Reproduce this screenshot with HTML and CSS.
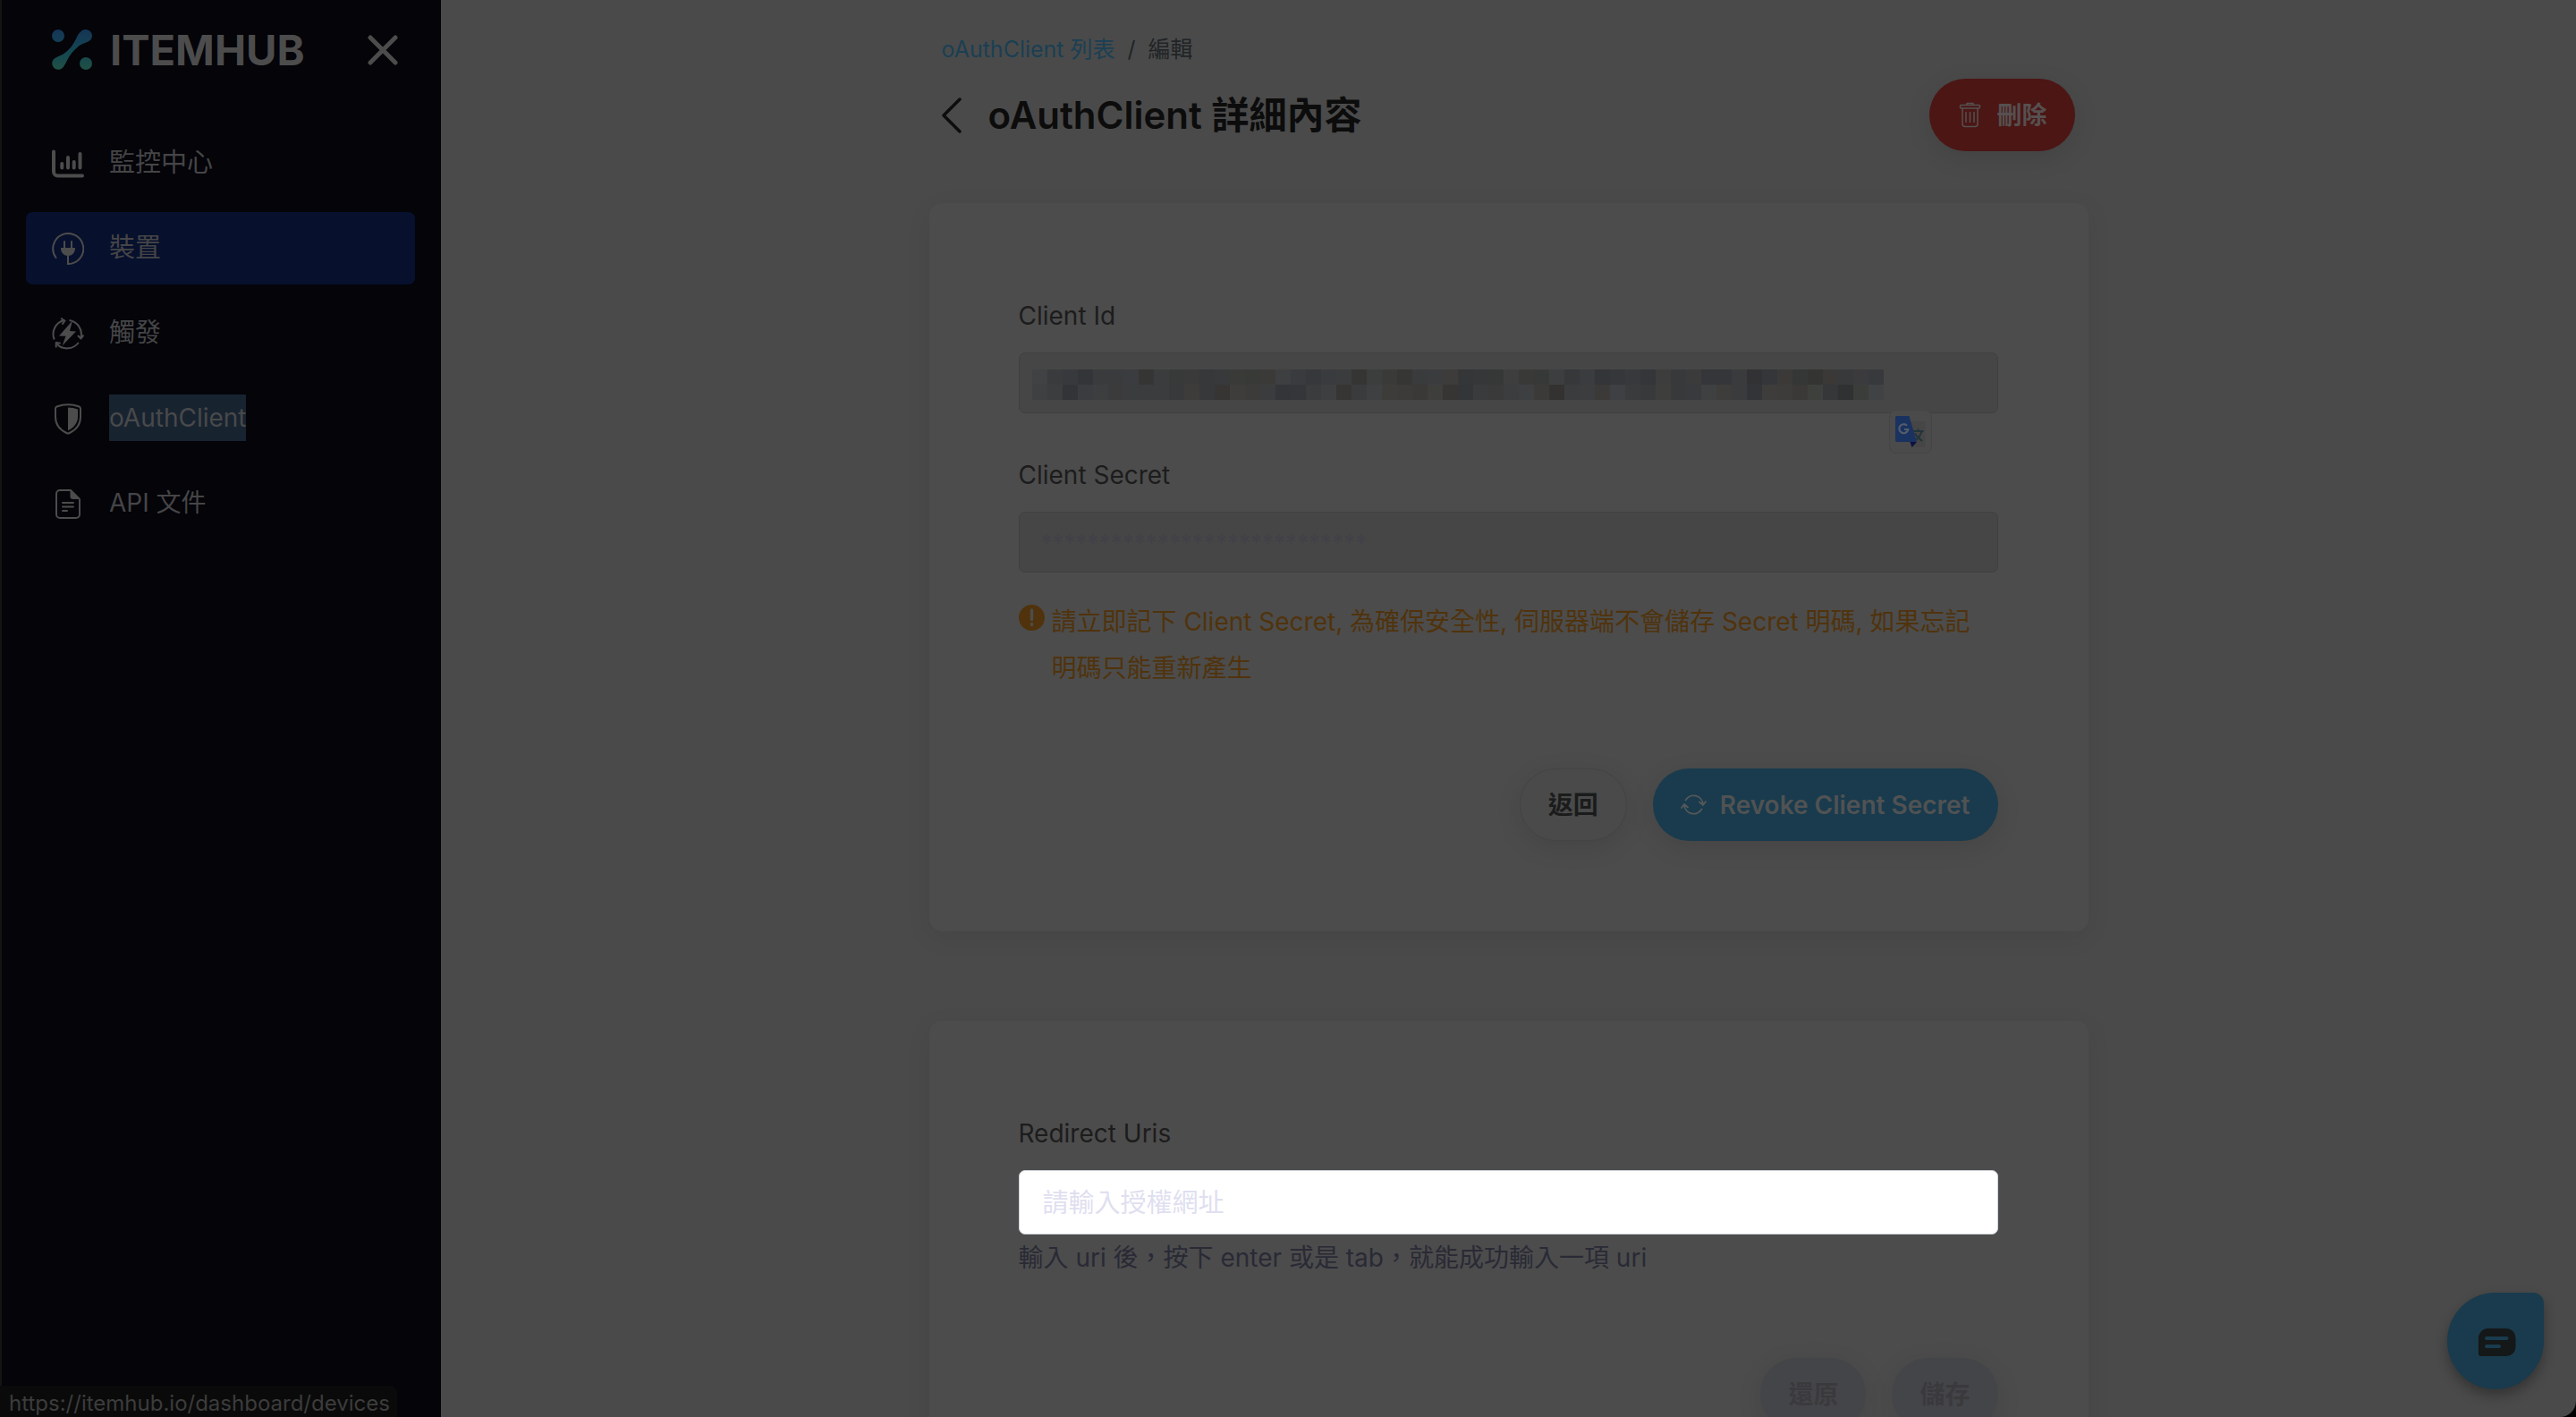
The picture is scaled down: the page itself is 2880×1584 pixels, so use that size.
FILE: index.html
```html
<!DOCTYPE html>
<html lang="zh-Hant">
<head>
<meta charset="utf-8">
<meta name="viewport" content="width=device-width, initial-scale=1">
<title>ItemHub - oAuthClient 詳細內容</title>
<link rel="stylesheet" href="styles.css">
</head>
<body>
<div class="app">
  <aside class="sidebar">
    <div class="sidebar-header">
      <a class="brand" href="#">
        <svg class="brand-mark" viewBox="0 0 45 45" aria-hidden="true">
          <defs>
            <linearGradient id="brand-fill" x1="0" y1="0" x2="0" y2="45" gradientUnits="userSpaceOnUse">
              <stop offset="0" stop-color="#153556"/>
              <stop offset="0.5" stop-color="#134552"/>
              <stop offset="1" stop-color="#205044"/>
            </linearGradient>
          </defs>
          <g fill="url(#brand-fill)">
            <circle cx="7" cy="7" r="7"/>
            <circle cx="38" cy="38" r="7"/>
            <path d="M38 0a7 7 0 0 1 2 13.700C37 15 33 16 30 18.500 24 23.500 20.500 28 17.500 33.500 15.800 37 15.500 38 13.800 40.300A7 7 0 1 1 4.500 31.400C8 29.500 12 28.500 16 25c5.500-4.500 8-9 11-14.500C29 6 30 4.500 31.500 3.200A7 7 0 0 1 38 0z"/>
          </g>
        </svg>
        <span class="brand-name">ITEMHUB</span>
      </a>
      <button class="sidebar-close" type="button" aria-label="關閉選單">
        <svg viewBox="0 0 34 34" aria-hidden="true"><path d="M3 3l28 28M31 3L3 31" fill="none" stroke="#4c4c4c" stroke-width="5" stroke-linecap="round"/></svg>
      </button>
    </div>
    <nav class="nav">
      <a class="nav-item" href="#">
        <svg class="nav-icon" viewBox="0 0 36 36" fill="none" stroke="#4c4c4c" stroke-width="4" stroke-linecap="round" aria-hidden="true"><path d="M2 4.500V27a4.500 4.500 0 0 0 4.500 4.500H34M11.300 18v4.500M18 11v11.500M24.700 16v6.500M31.500 7v15.500"/></svg>
        <span class="nav-label nav-label-zh">監控中心</span>
      </a>
      <a class="nav-item nav-item-active" href="#">
        <svg class="nav-icon" viewBox="0 0 36 36" fill="none" stroke="#4c4c4c" stroke-width="2" stroke-linecap="round" aria-hidden="true"><path d="M4.500 28A17 17 0 1 1 18 35V26M14 10v7M22 10v7"/><path d="M10 17h16v1a8 8 0 0 1-16 0z" fill="#4c4c4c" stroke="none"/></svg>
        <span class="nav-label nav-label-zh">裝置</span>
      </a>
      <a class="nav-item" href="#">
        <svg class="nav-icon" viewBox="0 0 36 36" fill="none" stroke="#4c4c4c" stroke-width="2" aria-hidden="true"><path d="M2.700 24.500A16 16 0 0 1 13.500 3M19.500 3A16 16 0 0 1 32.500 22.500M29.800 28A16 16 0 0 1 5.500 29.500"/><path d="M10 .8l4.500 2.700-3 4.200M29 20l3.500 3.500 3-4M4.700 33.500V28l5 .8" stroke-linejoin="round"/><path d="M23 3.500L8 20.500l7.500.3L11.500 31.500 27 15.500l-7-.5z" fill="#4c4c4c" stroke="none"/></svg>
        <span class="nav-label nav-label-zh">觸發</span>
      </a>
      <a class="nav-item" href="#">
        <svg class="nav-icon" viewBox="0 0 36 36" fill="none" stroke="#4c4c4c" stroke-width="2" stroke-linejoin="round" aria-hidden="true"><path d="M18 2.200c5 0 9 1 12.500 2.300 1.200.5 1.500 1.300 1.500 2.500v9c0 8-5 14.500-12.300 18-1.200.6-2.200.6-3.400 0C9 30.500 4 24 4 16V7c0-1.200.3-2 1.500-2.500C9 3.200 13 2.200 18 2.200z"/><path d="M18 5.500c4 0 7.500.8 11 2V16c0 6.500-4 12-11 15.300z" fill="#4c4c4c" stroke="none"/></svg>
        <span class="nav-label"><mark class="selected">oAuthClient</mark></span>
      </a>
      <a class="nav-item" href="#">
        <svg class="nav-icon" viewBox="0 0 36 36" fill="none" stroke="#4c4c4c" stroke-width="2" stroke-linecap="round" stroke-linejoin="round" aria-hidden="true"><path d="M9 3h12l10 10v17a4 4 0 0 1-4 4H9a4 4 0 0 1-4-4V7a4 4 0 0 1 4-4zM12 17h12M12 21.500h12M12 26h5"/><path d="M20.500 2.500V10a3 3 0 0 0 3 3h8z" fill="#4c4c4c" stroke="none"/></svg>
        <span class="nav-label">API 文件</span>
      </a>
    </nav>
  </aside>

  <main class="main">
    <div class="content">
      <nav class="breadcrumb" aria-label="breadcrumb">
        <a href="#">oAuthClient 列表</a>
        <span>/</span>
        <span>編輯</span>
      </nav>
      <header class="page-header">
        <a class="back-link" href="#" aria-label="返回列表">
          <svg viewBox="0 0 22 40" aria-hidden="true"><path d="M20 2L2 20l18 18" fill="none" stroke="#0d0d0d" stroke-width="3.500" stroke-linecap="round" stroke-linejoin="round"/></svg>
        </a>
        <h1>oAuthClient 詳細內容</h1>
        <button class="btn btn-danger" type="button">
          <svg class="btn-icon" viewBox="0 0 29 29" fill="none" stroke="#565050" stroke-width="1.500" stroke-linejoin="round" stroke-linecap="round" aria-hidden="true"><path d="M4.500 3.500h20a1 1 0 0 1 1 1V6a1 1 0 0 1-1 1h-20a1 1 0 0 1-1-1V4.500a1 1 0 0 1 1-1zM11 3V1.500h7V3M6 7v17.500a3 3 0 0 0 3 3h11a3 3 0 0 0 3-3V7M10 11.500v11M14.500 11.500v11M19 11.500v11"/></svg>
          刪除
        </button>
      </header>

      <section class="card">
        <div class="field">
          <label for="client-id">Client Id</label>
          <div class="masked-field">
            <input class="input" id="client-id" type="text" readonly>
            <svg class="mosaic" id="mosaic" viewBox="0 0 56 2" preserveAspectRatio="none" shape-rendering="crispEdges" aria-hidden="true"></svg>
            <button class="translate" type="button" aria-label="翻譯">
              <svg viewBox="0 0 34 35" aria-hidden="true">
                <path d="M14 6h18a1.500 1.500 0 0 1 1.500 1.500v26A1.500 1.500 0 0 1 32 35H19z" fill="#464646"/>
                <path d="M20 17h11.500M25.500 14.500V17M29.500 17c-1 4-4 8-7.500 10.500M22 19.500c2 4 5 6 8 8.500" fill="none" stroke="#22343a" stroke-width="2"/>
                <path d="M16.500 29H24l-5.500 6z" fill="#0d1040"/>
                <path d="M1.500 0H15.500L24 29H1.500A1.500 1.500 0 0 1 0 27.500v-26A1.500 1.500 0 0 1 1.500 0z" fill="#1a325f"/>
                <path d="M13 10.800A5 5 0 1 0 14.300 15H10" fill="none" stroke="#545c6c" stroke-width="2.200"/>
              </svg>
            </button>
          </div>
        </div>
        <div class="field">
          <label for="client-secret">Client Secret</label>
          <input class="input input-secret" id="client-secret" type="text" placeholder="****************************" readonly>
        </div>
        <p class="notice">
          <svg class="notice-icon" viewBox="0 0 29 29" aria-hidden="true"><circle cx="14.500" cy="14.500" r="14.500" fill="#50330c"/><path d="M14.500 6v10.500M14.500 21.500v1" stroke="#4c4c4c" stroke-width="3.400" stroke-linecap="round"/></svg>
          <span>請立即記下 Client Secret, 為確保安全性, 伺服器端不會儲存 Secret 明碼, 如果忘記明碼只能重新產生</span>
        </p>
        <div class="actions">
          <button class="btn btn-light" type="button">返回</button>
          <button class="btn btn-primary" type="button">
            <svg class="btn-icon" viewBox="0 0 29 29" fill="none" stroke="#55585a" stroke-width="1.800" stroke-linecap="round" stroke-linejoin="round" aria-hidden="true"><path d="M5.500 9.500A10.500 10.500 0 0 1 25 14.500M21 11.500l4 3.500 3-4M23.500 19.500A10.500 10.500 0 0 1 4 14.500M1 18l3-4 4 3.500"/></svg>
            Revoke Client Secret
          </button>
        </div>
      </section>

      <section class="card">
        <div class="field">
          <label for="redirect-uris">Redirect Uris</label>
          <input class="input input-focus" id="redirect-uris" type="text" placeholder="請輸入授權網址">
          <p class="help">輸入 uri 後，按下 enter 或是 tab，就能成功輸入一項 uri</p>
        </div>
        <div class="actions">
          <button class="btn btn-disabled" type="button" disabled>還原</button>
          <button class="btn btn-disabled" type="button" disabled>儲存</button>
        </div>
      </section>
    </div>
  </main>

  <button class="chat" type="button" aria-label="線上客服">
    <svg viewBox="0 0 42 32" aria-hidden="true"><path d="M11 0h20a10.500 10.500 0 0 1 10.500 10.500v10A10.500 10.500 0 0 1 31 31H3a3 3 0 0 1-3-3V11A11 11 0 0 1 11 0z" fill="#141818"/><path d="M9 11h22.500M9 20h14" stroke="#193b4d" stroke-width="4" stroke-linecap="round"/></svg>
  </button>
  <div class="status-bar">https://itemhub.io/dashboard/devices</div>
</div>
<script src="mosaic.js"></script>
</body>
</html>
```
FILE: styles.css
```css
* {
  box-sizing: border-box;
}

body {
  margin: 0;
  background: #000;
  color: #1c1c1c;
  font-family: Inter, "Noto Sans CJK TC", sans-serif;
  font-size: 28px;
  line-height: 44px;
}

a {
  color: inherit;
  text-decoration: none;
}

button,
input {
  font: inherit;
}

svg {
  display: block;
}

.app {
  position: relative;
  display: flex;
  height: 100vh;
  overflow: hidden;
  background: #4a4a4a;
  border-bottom-right-radius: 18px;
}

/* Sidebar */

.sidebar {
  flex: none;
  width: 493px;
  padding: 33px 29px 0 27px;
  border-left: 2px solid #141414;
  background: #040409;
}

.sidebar-header {
  display: flex;
  align-items: center;
  justify-content: space-between;
  height: 45px;
  margin-bottom: 64px;
  padding: 0 19px 0 29px;
}

.brand {
  display: flex;
  align-items: center;
  gap: 20px;
}

.brand-mark {
  width: 45px;
  height: 45px;
}

.brand-name {
  color: #4c4c4c;
  font-size: 47px;
  font-weight: 700;
}

.sidebar-close {
  padding: 0;
  border: 0;
  background: none;
}

.sidebar-close svg {
  width: 34px;
  height: 34px;
}

.nav {
  display: flex;
  flex-direction: column;
  gap: 14px;
}

.nav-item {
  display: flex;
  align-items: center;
  gap: 28px;
  height: 81px;
  padding: 0 29px;
  border-radius: 7px;
  color: #454547;
}

.nav-item-active {
  background: #07102d;
}

.nav-icon {
  width: 36px;
  height: 36px;
}

.nav-label {
  padding-bottom: 2px;
  line-height: 52px;
}

.nav-label-zh {
  font-size: 29px;
}

.selected {
  display: block;
  background: #182330;
  color: #48494a;
}

/* Page */

.main {
  flex: 1;
  padding: 36px 24px 0;
  overflow: hidden;
}

.content {
  max-width: 1296px;
  margin: 0 auto;
}

.breadcrumb {
  display: flex;
  gap: 14px;
  padding: 0 14px;
  color: #202426;
  font-size: 25px;
  line-height: 38px;
}

.breadcrumb a {
  color: #1a3f53;
}

.page-header {
  display: flex;
  align-items: center;
  gap: 30px;
  margin: 14px 0 58px;
  padding: 0 15px 0 14px;
}

.back-link svg {
  width: 22px;
  height: 40px;
}

h1 {
  flex: 1;
  margin: 0;
  color: #0c0c0c;
  font-size: 42px;
  font-weight: 600;
  line-height: 52px;
}

.card {
  margin-bottom: 100px;
  padding: 104px 101px 101px 100px;
  border-radius: 14px;
  background: #4c4c4c;
  box-shadow: 0 7px 29px rgba(0, 0, 0, 0.07);
}

.field {
  display: flex;
  flex-direction: column;
}

.field + .field {
  margin-top: 47px;
}

.field label {
  margin-bottom: 19px;
}

.input {
  width: 100%;
  height: 68px;
  padding: 0 26px;
  border: 1px solid #404040;
  border-radius: 7px;
  outline: 0;
  background: #464646;
  color: #1c1c1c;
}

.input::placeholder {
  color: #414148;
  opacity: 1;
}

.input-secret {
  padding: 0 24px;
  font-size: 26px;
}

.input-focus {
  height: 72px;
  border-color: #ced4da;
  background: #fff;
  font-size: 29px;
}

.input-focus::placeholder {
  color: #dfdff0;
}

.masked-field {
  position: relative;
}

.mosaic {
  position: absolute;
  top: 19px;
  left: 15px;
  width: 952px;
  height: 34px;
}

.translate {
  position: absolute;
  top: 64px;
  right: 74px;
  padding: 6px;
  border: 1px solid #454545;
  border-radius: 8px;
  background: #4b4b4b;
}

.translate svg {
  width: 34px;
  height: 35px;
}

.notice {
  display: flex;
  gap: 8px;
  margin: 29px 0 0;
  padding-right: 14px;
  color: #50330c;
  line-height: 52px;
}

.notice-icon {
  flex: none;
  width: 29px;
  height: 29px;
  margin-top: 7px;
}

.help {
  margin: 4px 0 0;
  padding-bottom: 4px;
  color: #292a35;
}

.actions {
  display: flex;
  justify-content: flex-end;
  gap: 29px;
  margin-top: 86px;
}

.btn {
  display: flex;
  align-items: center;
  gap: 15px;
  height: 81px;
  padding: 0 31px;
  border: 0;
  border-radius: 41px;
  font-weight: 600;
  box-shadow: 0 7px 29px rgba(0, 0, 0, 0.1);
}

.btn-icon {
  width: 29px;
  height: 29px;
}

.btn-danger {
  background: #4b1614;
  color: #565050;
}

.btn-light {
  border: 1px solid #444;
  background: #4a4a4a;
  color: #1a1c1c;
}

.btn-primary {
  background: #193b4d;
  color: #505253;
}

.btn-disabled {
  background: #444549;
  color: #3a3a3c;
}

/* Floating elements */

.chat {
  position: absolute;
  right: 36px;
  bottom: 31px;
  display: flex;
  align-items: center;
  justify-content: center;
  width: 108px;
  height: 108px;
  padding: 3px 0 0 3px;
  border: 0;
  border-radius: 54px 12px 54px 54px;
  background: #193b4d;
  box-shadow: 0 7px 14px rgba(0, 0, 0, 0.3);
}

.chat svg {
  width: 42px;
  height: 32px;
}

.status-bar {
  position: absolute;
  bottom: 0;
  left: 0;
  padding: 4px 8px 0 10px;
  border-top-right-radius: 8px;
  background: #0a0a0a;
  color: #3c3c3c;
  font-size: 24px;
  line-height: 31px;
}
```
FILE: mosaic.js
```js
// Pixelated mask over the client id, two rows of shades.
const rows = [
  "404244 3a3b3d 38393c 343538 393b3d 393b3d 3b3c3f 353534 3a3c3e 383a39 393a39 363839 38393b 3a3a39 383a38 3b3a39 3e3f41 3a3b3e 37383b 3a3b3e 3b3c3e 353534 3c3d3d 3a3a39 363635 3a3b3d 3b3c3e 3d3c3b 343638 353739 363837 3f3e3e 393938 373938 3c3e40 36383a 3b3c3f 343538 35373a 38393c 343639 3c3d3c 38393b 3c3b3b 343639 343639 3a3b3d 323234 35363a 3b3a39 353736 343433 3a3938 38393b 3b3b3e 38393c",
  "3e4042 3b3d3f 333437 3b3c3f 3d3e40 3b3b3c 3a3c3e 3a3c3e 3a3c3e 37393b 3d3c3b 36383a 363534 3e3d3c 3c3b3a 3a3c3e 343538 353639 3a3c3e 3d3f40 363534 393b3c 3e4042 3d3c3b 3c3b3a 3a3938 3e3e3d 363534 333538 393b3d 3b3a3a 3c3d3f 3d3f41 3b3a39 333231 3b3c3e 3c3d3f 3b3a39 3e4043 3a3b3d 37393b 3e3e3d 38393b 393a3d 3f4042 3e3d3c 393b3d 333437 3e3d3c 3d3c3b 3a3938 3e403e 353739 303132 3b3d3a 404244"
];

const mosaic = document.getElementById("mosaic");
rows.forEach((row, y) => {
  row.split(" ").forEach((shade, x) => {
    const cell = document.createElementNS("http://www.w3.org/2000/svg", "rect");
    cell.setAttribute("x", x);
    cell.setAttribute("y", y);
    cell.setAttribute("width", 1);
    cell.setAttribute("height", 1);
    cell.setAttribute("fill", "#" + shade);
    mosaic.appendChild(cell);
  });
});
```
